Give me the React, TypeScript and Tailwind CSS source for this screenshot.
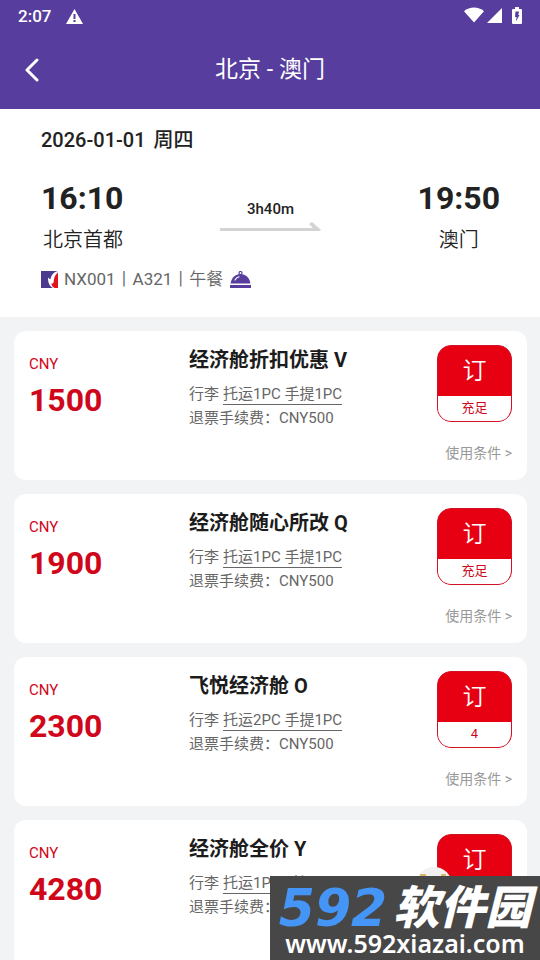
import React from "react";

type Fare = {
  price: string;
  title: string;
  baggage: string;
  fee: string;
  seats: string;
};

const fares: Fare[] = [
  { price: "1500", title: "经济舱折扣优惠 V", baggage: "托运1PC 手提1PC", fee: "CNY500", seats: "充足" },
  { price: "1900", title: "经济舱随心所改 Q", baggage: "托运1PC 手提1PC", fee: "CNY500", seats: "充足" },
  { price: "2300", title: "飞悦经济舱 O", baggage: "托运2PC 手提1PC", fee: "CNY500", seats: "4" },
  { price: "4280", title: "经济舱全价 Y", baggage: "托运1PC 手提1PC", fee: "CNY500", seats: "充足" },
];

function StatusBar() {
  return (
    <div className="flex h-8 items-center justify-between px-[18px]">
      <div className="flex items-center gap-[15px]">
        <span className="text-[17px] leading-5 font-medium">2:07</span>
        <svg width="17" height="15" viewBox="0 0 17 15" aria-hidden="true">
          <path d="M8.5 0 17 15H0Z" fill="#fff" />
          <path d="M7.5 5h2v5h-2zM7.5 11h2v2h-2z" fill="#563d9e" />
        </svg>
      </div>
      <div className="flex items-center pb-[2px]">
        <svg width="20" height="16" viewBox="0 0 20 16" fill="#fff" aria-hidden="true">
          <path d="M0 4.2C5.5-.7 14.500-.7 20 4.2L10 15.500Z" />
        </svg>
        <svg className="ml-[3px]" width="15" height="15" viewBox="0 0 15 15" fill="#fff" aria-hidden="true">
          <path d="M15 0v15H0Z" />
        </svg>
        <svg className="ml-[10px]" width="10" height="17" viewBox="0 0 10 17" aria-hidden="true">
          <path d="M3 0h4v2h2q1 0 1 1v13q0 1-1 1H1q-1 0-1-1V3q0-1 1-1h2Z" fill="#fff" />
          <path d="M3.500 4.500H7L6.300 8H7.500L4 14.500 4.600 10H3Z" fill="#563d9e" />
        </svg>
      </div>
    </div>
  );
}

function AirlineLogo() {
  return (
    <svg width="17" height="17" viewBox="0 0 17 17" role="img" aria-label="NX">
      <path d="M0 0h17v17H0Z" fill="#4b3a8e" />
      <path d="M17 0v17h-5C8.500 15 7 12 7 6.500c1 1 1.800 1.600 2.500 1.800C10 5 12 1 17 0Z" fill="#fff" />
      <path d="M17 1.500V17h-3.500c-2-1.200-3-2.800-3.200-4.800 1 .5 1.900.3 2.300-.6C13 8.500 13 4.500 17 1.500Z" fill="#e2121d" />
    </svg>
  );
}

function MealIcon() {
  return (
    <svg width="21" height="17" viewBox="0 0 21 17" aria-hidden="true">
      <circle cx="10.500" cy="2" r="1.500" fill="none" stroke="#563d9e" strokeWidth="1.200" />
      <path d="M.6 12.500C1.500 6.500 5.500 3 10.500 3s9 3.500 9.900 9.500Z" fill="#563d9e" />
      <path d="M5 9C6 7.200 7 6.400 9 5.800" fill="none" stroke="#fff" strokeWidth="1.200" strokeLinecap="round" />
      <path d="M0 14h21v3H0Z" fill="#563d9e" />
    </svg>
  );
}

function FlightSummary() {
  return (
    <section className="bg-white pt-[19px] pr-10 pb-[26px] pl-[41px] text-[#222]">
      <h2 className="flex gap-2 text-[20px] leading-6 font-medium">
        <span>2026-01-01</span>
        <span>周四</span>
      </h2>
      <div className="mt-[26px] flex items-start justify-between">
        <div>
          <div className="text-[32px] leading-10 font-bold">16:10</div>
          <div className="mt-2 pl-[2px] text-[20px] leading-7 font-[350]">北京首都</div>
        </div>
        <div className="flex flex-col items-center pt-[21px]">
          <div className="text-[15px] leading-5 font-medium">3h40m</div>
          <svg className="mt-[2px]" width="102" height="11" viewBox="0 0 102 11" fill="#d3d3d3" aria-hidden="true">
            <path d="M0 7h93l-4-4 3-2 9 8-1 1H0Z" />
          </svg>
        </div>
        <div className="text-center">
          <div className="text-[32px] leading-10 font-bold">19:50</div>
          <div className="mt-2 text-[20px] leading-7 font-[350]">澳门</div>
        </div>
      </div>
      <div className="mt-[13px] flex h-6 items-center text-[17px] leading-6 font-[350] text-[#666]">
        <AirlineLogo />
        <span className="ml-[6px] font-normal">NX001</span>
        <span>丨</span>
        <span className="font-normal">A321</span>
        <span>丨</span>
        <span className="mr-[7px]">午餐</span>
        <MealIcon />
      </div>
    </section>
  );
}

function FareCard({ fare }: { fare: Fare }) {
  return (
    <li className="flex h-[149px] shrink-0 rounded-xl bg-white pt-[14px] pr-[15px] pl-[15px]">
      <div className="w-40 pt-[9px] text-[#d0071b]">
        <div className="text-[15px] leading-5 font-normal">CNY</div>
        <div className="mt-[6px] text-[32px] leading-10 font-bold">{fare.price}</div>
      </div>
      <div className="flex-1 pt-px">
        <h3 className="text-[20px] leading-7 font-bold text-[#1c1c1c]">{fare.title}</h3>
        <div className="mt-2 flex h-6 items-start gap-1 text-[15px] leading-6 font-normal text-[#666]">
          <span>行李</span>
          <button type="button" className="h-[23px] border-b border-[#666] leading-6">
            {fare.baggage}
          </button>
        </div>
        <div className="text-[15px] leading-6 font-normal text-[#666]">退票手续费：{fare.fee}</div>
      </div>
      <div className="flex flex-col items-end">
        <button
          type="button"
          className="flex h-[77px] w-[75px] flex-col overflow-hidden rounded-[14px] border border-[#cf1226] bg-[#e60012]"
        >
          <span className="h-[50px] w-full text-[24px] leading-[50px] font-[350] text-white">订</span>
          <span className="w-full flex-1 bg-white text-[13px] leading-6 font-normal text-[#d0071b]">{fare.seats}</span>
        </button>
        <button type="button" className="mt-[21px] text-[14px] leading-5 font-normal text-[#999]">
          使用条件 &gt;
        </button>
      </div>
    </li>
  );
}

function Watermark() {
  return (
    <div className="fixed right-0 bottom-0 h-[84px] w-[270px]">
      <svg className="absolute -top-[9px] left-[146px]" width="36" height="18" viewBox="0 0 36 18" aria-hidden="true">
        <circle cx="18" cy="18" r="18" fill="#f1f1f1" />
        <path d="M4 7h6v2H4zM25 7h5v2h-5z" fill="#d8b968" />
      </svg>
      <div className="relative flex h-full flex-col items-center bg-[#474747] pt-3 text-white">
        <div className="flex h-10 items-center gap-[6px] leading-10 italic">
          <span className="font-['DejaVu_Sans',sans-serif] text-[52px] font-bold text-[#4595f7]">592</span>
          <span className="text-[46px] font-black">软件园</span>
        </div>
        <div className="mt-px font-['Noto_Sans',sans-serif] text-[25px] leading-7 font-semibold">www.592xiazai.com</div>
      </div>
    </div>
  );
}

export default function App() {
  return (
    <div className="flex h-screen flex-col overflow-hidden bg-[#f2f3f5] font-[Roboto,'Noto_Sans_CJK_SC',sans-serif]">
      <header className="h-[109px] shrink-0 bg-[#563d9e] text-white">
        <StatusBar />
        <div className="grid h-[75px] grid-cols-[64px_1fr_64px] items-center">
          <button type="button" aria-label="返回" className="flex h-12 items-center pl-6">
            <svg width="16" height="24" viewBox="0 0 16 24" fill="none" stroke="#fff" strokeWidth="3" strokeLinecap="round" strokeLinejoin="round" aria-hidden="true">
              <path d="M13 2 3 12l10 10" />
            </svg>
          </button>
          <h1 className="text-center text-[23px] leading-8">北京 - 澳门</h1>
        </div>
      </header>
      <main className="flex-1 overflow-y-auto [scrollbar-width:none]">
        <FlightSummary />
        <ul className="flex flex-col gap-[14px] py-[14px] pr-[13px] pl-[14px]">
          {fares.map((fare) => (
            <FareCard key={fare.price} fare={fare} />
          ))}
        </ul>
      </main>
      <Watermark />
    </div>
  );
}
